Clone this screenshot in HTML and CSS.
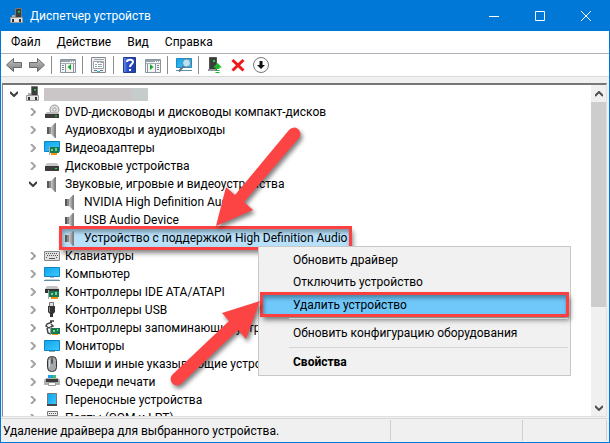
FILE: index.html
```html
<!DOCTYPE html>
<html lang="ru">
<head>
    <meta charset="UTF-8">
    <meta name="viewport" content="width=device-width, initial-scale=1.0">
    <title>Диспетчер устройств</title>
    <link rel="stylesheet" href="styles.css">
</head>
<body>
    <svg class="defs" aria-hidden="true">
        <defs>
            <linearGradient id="metal"><stop offset="0" stop-color="#c8c8c8"/><stop offset=".5" stop-color="#a0a0a0"/><stop offset="1" stop-color="#606060"/></linearGradient>
            <linearGradient id="screen" x2="1" y2="1"><stop offset="0" stop-color="#10a4ee"/><stop offset="1" stop-color="#3cc8fc"/></linearGradient>
            <linearGradient id="grayArrow" x2="0" y2="1"><stop offset="0" stop-color="#c4c4c4"/><stop offset="1" stop-color="#7c7c7c"/></linearGradient>
            <linearGradient id="helpBlue"><stop offset="0" stop-color="#6c9cf0"/><stop offset=".3" stop-color="#2c50c8"/><stop offset="1" stop-color="#203ca8"/></linearGradient>
        </defs>
        <symbol id="i-pc" viewBox="0 0 16 16">
            <path fill="#3c3c3c" stroke="#777" d="M6.500 .5h6v9h-6z"/>
            <path fill="#18d840" d="M9 3h2v1.500H9z"/>
            <path fill="#e4e4e4" stroke="#999" d="M1.500 9.500h12v5h-12z"/>
            <path fill="#333" d="M3 11h2v3H3zM10 11h2v3h-2z"/>
            <path fill="#aaa" d="M3 7h3v2H3z"/>
        </symbol>
        <symbol id="i-speaker" viewBox="0 0 16 16">
            <path fill="#585858" d="M3 5h2v7H3z"/>
            <path fill="#8c8c8c" d="M5 5h2v7H5z"/>
            <path fill="url(#metal)" d="M7 5l4-4h1v15h-1l-4-4z"/>
            <path fill="#808080" d="M11 1h1v15h-1z"/>
        </symbol>
        <symbol id="i-dvd" viewBox="0 0 16 16">
            <circle cx="10.500" cy="5.500" r="4.500" fill="#dcdcdc" stroke="#999"/>
            <circle cx="10.500" cy="5.500" r="1.500" fill="#fff" stroke="#999"/>
            <path fill="#bbb" d="M3 8h11l1 2H1z"/>
            <path fill="#3c3c3c" d="M1 10h14v4H1z"/>
            <path fill="#20e048" d="M11 11.500h2v1h-2z"/>
        </symbol>
        <symbol id="i-video" viewBox="0 0 16 16">
            <path fill="url(#screen)" stroke="#0c84c4" d="M.5 1.500h15v10H.5z"/>
            <path fill="#187850" d="M6 7h9v6H6z"/>
            <path fill="#6ad090" d="M7 9h2v2H7zM11 8h2v3h-2z"/>
            <path fill="#f09018" d="M7 13h6v2H7z"/>
            <path fill="#a8b0b0" d="M5 6h1v9H5z"/>
        </symbol>
        <symbol id="i-disk" viewBox="0 0 16 16">
            <path fill="#c8c8c8" d="M3 5h10l2 3H1z"/>
            <path fill="#3c3c3c" d="M1 8h14v5H1z"/>
            <path fill="#20e048" d="M11 10h2v1h-2z"/>
        </symbol>
        <symbol id="i-keyboard" viewBox="0 0 16 16">
            <path fill="#e0e0e0" stroke="#888" d="M.5 3.500h15v9H.5z"/>
            <path stroke="#555" stroke-dasharray="1 1" d="M2 5.500h12M3 7.500h11M2 9.500h2M12 9.500h2"/>
            <path stroke="#555" d="M5 10.500h6"/>
        </symbol>
        <symbol id="i-computer" viewBox="0 0 16 16">
            <path fill="url(#screen)" stroke="#0c84c4" d="M.5 1.500h15v9H.5z"/>
            <path fill="#a8bcc4" d="M6 11h4v1H6z"/>
            <path stroke="#6090a0" d="M0 14.500h16"/>
            <path stroke="#c4d8e0" d="M1 13.500h14"/>
        </symbol>
        <symbol id="i-ide" viewBox="0 0 16 16">
            <path fill="#c4c4c4" d="M3 2h10l2 3H1z"/>
            <path fill="#333" d="M1 5h14v4H1z"/>
            <path fill="#187850" d="M5 7h10v6H5z"/>
            <path fill="#78d8a0" d="M7 9h2v2H7zM11 8h2v3h-2z"/>
            <path fill="#f09018" d="M7 13h7v2H7z"/>
            <path fill="#aaa" d="M4 6h1v9H4z"/>
        </symbol>
        <symbol id="i-usb" viewBox="0 0 16 16">
            <path fill="#ddd" stroke="#777" d="M5.500 .5h4v4h-4z"/>
            <path fill="#333" d="M4 4h7v6l-2 2v3H6v-3l-2-2z"/>
            <path fill="#888" d="M5 5h1v5H5z"/>
        </symbol>
        <symbol id="i-storage" viewBox="0 0 16 16">
            <path fill="none" stroke="#444" stroke-width="1.500" d="M8 2L3 4l-1 2 3 2 4-2-2-2M6 1h4M3 8l1 5 3 1"/>
            <path fill="#187850" d="M7 8h9v6H7z"/>
            <path fill="#78d8a0" d="M9 10h2v2H9zM13 9h1v2h-1z"/>
            <path fill="#f09018" d="M8 14h6v1H8z"/>
            <path fill="#999" d="M6 7h1v8H6z"/>
        </symbol>
        <symbol id="i-monitor" viewBox="0 0 16 16">
            <path fill="url(#screen)" stroke="#0c84c4" d="M.5 2.500h15v10H.5z"/>
            <path fill="#90a8b0" d="M5 13h6v1H5z"/>
        </symbol>
        <symbol id="i-mouse" viewBox="0 0 16 16">
            <rect x="3.500" y=".5" width="9" height="15" rx="4" fill="#a4a8ac" stroke="#333"/>
            <path stroke="#333" d="M8 1v7"/>
            <path fill="#eee" stroke="#555" d="M7.500 3.500h1v3h-1z"/>
            <path stroke="#ddd" d="M5.500 4v7"/>
        </symbol>
        <symbol id="i-printer" viewBox="0 0 16 16">
            <path fill="#20a0e8" d="M4 1h8v4H4z"/>
            <path fill="#40c060" d="M9 1h3v3H9z"/>
            <path fill="#b0b0b0" d="M2 4h12l2 2v5H0V6z"/>
            <path fill="#3c3c3c" d="M2 5h12v3H2z"/>
            <path fill="#fff" stroke="#999" d="M4.500 8.500h7v3h-7z"/>
        </symbol>
        <symbol id="i-portable" viewBox="0 0 16 16">
            <path fill="url(#screen)" stroke="#777" d="M3.500 1.500h9v12h-9z"/>
            <path fill="#444" d="M3 12h10v2H3z"/>
        </symbol>
        <symbol id="i-port" viewBox="0 0 16 16">
            <path fill="#eee" stroke="#777" d="M3.500 1.500h10v4h-10z"/>
            <path stroke="#555" stroke-dasharray="1 1" d="M5 3.500h7"/>
            <path fill="#555" d="M3 6h11v5l-2 3H5l-2-3z"/>
        </symbol>
        <symbol id="i-down" viewBox="0 0 8 6"><path fill="none" stroke="#3c3c3c" stroke-width="2" d="M0 1l4 4 4-4"/></symbol>
        <symbol id="i-right" viewBox="0 0 6 8"><path fill="none" stroke="#a4a4a4" stroke-width="2" d="M1 0l4 4-4 4"/></symbol>
        <symbol id="i-panel" viewBox="0 0 16 14">
            <path fill="#f4f4f4" stroke="#8c949c" d="M.5 .5h15v13H.5z"/>
            <path fill="#94a0ac" d="M1 1h14v2H1z"/>
            <path stroke="#fff" stroke-dasharray="1 1" d="M10 2.500h5"/>
            <path stroke="#a4acb4" d="M1 4.500h14"/>
        </symbol>
    </svg>

    <div class="window">
        <header class="titlebar">
            <svg class="icon"><use href="#i-pc"/></svg>
            <h1>Диспетчер устройств</h1>
            <div class="window-controls">
                <button aria-label="Свернуть"><svg viewBox="0 0 10 10"><path d="M0 5.500h10"/></svg></button>
                <button aria-label="Развернуть"><svg viewBox="0 0 10 10"><path d="M.5 .5h9v9h-9z"/></svg></button>
                <button aria-label="Закрыть"><svg viewBox="0 0 10 10"><path d="M0 0l10 10M10 0L0 10"/></svg></button>
            </div>
        </header>

        <nav class="menubar">
            <button>Файл</button>
            <button>Действие</button>
            <button>Вид</button>
            <button>Справка</button>
        </nav>

        <div class="toolbar">
            <button aria-label="Назад"><svg class="icon" viewBox="0 0 16 16"><path fill="url(#grayArrow)" stroke="#686868" d="M.5 8l7-6.500v4h8v5h-8v4z"/></svg></button>
            <button aria-label="Вперёд"><svg class="icon" viewBox="0 0 16 16"><path fill="url(#grayArrow)" stroke="#686868" d="M15.500 8l-7-6.500v4h-8v5h8v4z"/></svg></button>
            <span class="separator"></span>
            <button aria-label="Дерево консоли"><svg class="icon" viewBox="0 0 16 16">
                <use href="#i-panel" y="2" width="16" height="14"/>
                <path stroke="#8c949c" d="M5.500 7v8M13.500 7v8"/><path stroke="#7088a0" d="M2 8.500h2M2 10.500h2M2 12.500h2"/>
                <path fill="#10a828" d="M11 7v6L7.500 10z"/></svg></button>
            <span class="separator"></span>
            <button aria-label="Свойства"><svg class="icon" viewBox="0 0 16 16">
                <path fill="#f0f0f0" stroke="#84888c" d="M.5 .5h14v15H.5z"/>
                <path fill="#fff" stroke="#9ca4ac" d="M2.500 4.500h10v7h-10z"/>
                <path stroke="#9ca4ac" d="M3 2.500h10M6 5.500h2M9 5.500h3M4 7.500h2M7 7.500h4M4 9.500h2M7 9.500h4"/>
                <path stroke="#707880" d="M3 13.500h3M9 13.500h3"/><path stroke="#30b8e8" d="M6 14.500h3"/></svg></button>
            <span class="separator"></span>
            <button aria-label="Справка"><svg class="icon" viewBox="0 0 16 16">
                <path fill="url(#helpBlue)" stroke="#203c90" d="M1.500 .5h12v15h-12z"/>
                <path fill="none" stroke="#fff" stroke-width="2" d="M5 5c0-3 6-3 6 0 0 2-3 2-3 5"/><path fill="#fff" d="M7 12h2v2H7z"/></svg></button>
            <button aria-label="Панель действий"><svg class="icon" viewBox="0 0 16 16">
                <use href="#i-panel" y="2" width="16" height="14"/>
                <path stroke="#8c949c" d="M2.500 7v8M10.500 7v8"/><path stroke="#7088a0" d="M12 8.500h2M12 10.500h2M12 12.500h2"/>
                <path fill="#10a828" d="M5 7v6l3.500-3z"/></svg></button>
            <span class="separator"></span>
            <button aria-label="Обновить конфигурацию"><svg class="icon" viewBox="0 0 16 16">
                <path fill="url(#screen)" stroke="#2888b8" d="M.5 1.500h15v9H.5z"/><path stroke="#6090a0" d="M0 13.500h16"/>
                <circle cx="10.500" cy="6" r="4" fill="#b4e4fa" stroke="#70889c"/><path stroke="#607888" stroke-width="2" d="M7.500 9L3 14.500"/></svg></button>
            <span class="separator"></span>
            <button aria-label="Обновить драйвер"><svg class="icon" viewBox="0 0 16 16">
                <path fill="#3c3c3c" stroke="#555" d="M2.500 .5h7v13h-7z"/><path fill="#20d840" d="M6 3h2v2H6z"/><path fill="#999" d="M1 12h8v2H1z"/>
                <path fill="#18b828" d="M10.500 6L15 10.500h-2.500V12h-4v-1.500H6z"/><path stroke="#18b828" d="M8.500 13.500h4M8.500 15.500h4"/></svg></button>
            <button aria-label="Удалить устройство"><svg class="icon" viewBox="0 0 16 16"><path stroke="#f01818" stroke-width="3" d="M2.500 3l11 10.500M13.500 3l-11 10.500"/></svg></button>
            <button aria-label="Отключить устройство"><svg class="icon" viewBox="0 0 16 16">
                <circle cx="8" cy="8" r="7.500" fill="#fff" stroke="#777"/><path fill="#111" d="M6.500 4h3v4H12l-4 4-4-4h2.500z"/></svg></button>
        </div>

        <main class="content">
            <ul class="tree">
                <li class="row root"><button class="toggle" aria-label="Свернуть"><svg class="open"><use href="#i-down"/></svg></button><svg class="icon"><use href="#i-pc"/></svg><span class="computer-name"></span></li>
                <li class="row"><button class="toggle" aria-label="Развернуть"><svg><use href="#i-right"/></svg></button><svg class="icon"><use href="#i-dvd"/></svg><span class="label">DVD-дисководы и дисководы компакт-дисков</span></li>
                <li class="row"><button class="toggle" aria-label="Развернуть"><svg><use href="#i-right"/></svg></button><svg class="icon"><use href="#i-speaker"/></svg><span class="label">Аудиовходы и аудиовыходы</span></li>
                <li class="row"><button class="toggle" aria-label="Развернуть"><svg><use href="#i-right"/></svg></button><svg class="icon"><use href="#i-video"/></svg><span class="label">Видеоадаптеры</span></li>
                <li class="row"><button class="toggle" aria-label="Развернуть"><svg><use href="#i-right"/></svg></button><svg class="icon"><use href="#i-disk"/></svg><span class="label">Дисковые устройства</span></li>
                <li class="row"><button class="toggle" aria-label="Свернуть"><svg class="open"><use href="#i-down"/></svg></button><svg class="icon"><use href="#i-speaker"/></svg><span class="label">Звуковые, игровые и видеоустройства</span></li>
                <li class="row device"><svg class="icon"><use href="#i-speaker"/></svg><span class="label">NVIDIA High Definition Audio</span></li>
                <li class="row device"><svg class="icon"><use href="#i-speaker"/></svg><span class="label">USB Audio Device</span></li>
                <li class="row device"><span class="selected marked"><svg class="icon"><use href="#i-speaker"/></svg><span class="label">Устройство с поддержкой High Definition Audio</span></span></li>
                <li class="row"><button class="toggle" aria-label="Развернуть"><svg><use href="#i-right"/></svg></button><svg class="icon"><use href="#i-keyboard"/></svg><span class="label">Клавиатуры</span></li>
                <li class="row"><button class="toggle" aria-label="Развернуть"><svg><use href="#i-right"/></svg></button><svg class="icon"><use href="#i-computer"/></svg><span class="label">Компьютер</span></li>
                <li class="row"><button class="toggle" aria-label="Развернуть"><svg><use href="#i-right"/></svg></button><svg class="icon"><use href="#i-ide"/></svg><span class="label">Контроллеры IDE ATA/ATAPI</span></li>
                <li class="row"><button class="toggle" aria-label="Развернуть"><svg><use href="#i-right"/></svg></button><svg class="icon"><use href="#i-usb"/></svg><span class="label">Контроллеры USB</span></li>
                <li class="row"><button class="toggle" aria-label="Развернуть"><svg><use href="#i-right"/></svg></button><svg class="icon"><use href="#i-storage"/></svg><span class="label">Контроллеры запоминающих устройств</span></li>
                <li class="row"><button class="toggle" aria-label="Развернуть"><svg><use href="#i-right"/></svg></button><svg class="icon"><use href="#i-monitor"/></svg><span class="label">Мониторы</span></li>
                <li class="row"><button class="toggle" aria-label="Развернуть"><svg><use href="#i-right"/></svg></button><svg class="icon"><use href="#i-mouse"/></svg><span class="label">Мыши и иные указывающие устройства</span></li>
                <li class="row"><button class="toggle" aria-label="Развернуть"><svg><use href="#i-right"/></svg></button><svg class="icon"><use href="#i-printer"/></svg><span class="label">Очереди печати</span></li>
                <li class="row"><button class="toggle" aria-label="Развернуть"><svg><use href="#i-right"/></svg></button><svg class="icon"><use href="#i-portable"/></svg><span class="label">Переносные устройства</span></li>
                <li class="row"><button class="toggle" aria-label="Развернуть"><svg><use href="#i-right"/></svg></button><svg class="icon"><use href="#i-port"/></svg><span class="label">Порты (COM и LPT)</span></li>
            </ul>
            <div class="scrollbar">
                <button aria-label="Вверх"><svg viewBox="0 0 8 6"><path d="M0 5l4-4 4 4"/></svg></button>
                <div class="track"><div class="thumb"></div></div>
                <button aria-label="Вниз"><svg viewBox="0 0 8 6"><path d="M0 1l4 4 4-4"/></svg></button>
            </div>
        </main>

        <footer class="statusbar">
            <span class="status-text">Удаление драйвера для выбранного устройства.</span>
            <span class="status-cell"></span>
            <span class="status-cell"></span>
        </footer>

        <div class="context-menu">
            <button>Обновить драйвер</button>
            <button>Отключить устройство</button>
            <button class="active"><span class="highlight marked">Удалить устройство</span></button>
            <hr>
            <button>Обновить конфигурацию оборудования</button>
            <hr>
            <button class="default">Свойства</button>
        </div>

        <svg class="arrows" viewBox="0 0 610 443" aria-hidden="true">
            <path d="M216 226L226 187L235 195L289 130A6 6 0 0 1 299 138L244 202L253 210Z"/>
            <path d="M260 301L222 313L229 321L173 374A6 6 0 0 0 181 384L238 330L246 339Z"/>
        </svg>
    </div>
</body>
</html>
```
FILE: styles.css
```css
* {
    box-sizing: border-box;
}
body {
    margin: 0;
    font-family: Roboto, "Open Sans", sans-serif;
    font-size: 12px;
    line-height: 18px;
    color: #000;
}
button {
    margin: 0;
    padding: 0;
    border: none;
    background: none;
    font: inherit;
    color: inherit;
}
svg {
    display: block;
}
.defs {
    position: absolute;
    width: 0;
    height: 0;
}
.icon {
    flex: none;
    width: 16px;
    height: 16px;
}
.window {
    position: relative;
    display: flex;
    flex-direction: column;
    height: 100vh;
    border: 1px solid #0078d7;
    border-top: none;
    background: #f0f0f0;
    overflow: hidden;
}

/* title and menu */
.titlebar {
    display: flex;
    align-items: center;
    flex: none;
    height: 31px;
    padding-left: 8px;
    background: #0078d7;
    color: #fff;
}
.titlebar h1 {
    margin: 0 auto 0 5px;
    font-size: 12px;
    font-weight: normal;
}
.window-controls {
    display: flex;
}
.window-controls button {
    display: flex;
    align-items: center;
    justify-content: center;
    width: 46px;
    height: 31px;
}
.window-controls svg {
    width: 10px;
    height: 10px;
    fill: none;
    stroke: #fff;
}
.menubar {
    display: flex;
    flex: none;
    gap: 16px;
    height: 23px;
    padding: 0 10px;
    background: #fff;
    border-bottom: 1px solid #b0b0b8;
}
.toolbar {
    display: flex;
    align-items: center;
    flex: none;
    gap: 1px;
    height: 23px;
    padding: 0 2px;
    background: #fff;
    border-bottom: 1px solid #d8d8d8;
}
.toolbar button {
    display: flex;
    justify-content: center;
    width: 22px;
}
.separator {
    width: 1px;
    height: 18px;
    margin: 0 4px 0 2px;
    background: #8c8c8c;
}

/* device tree */
.content {
    display: flex;
    flex: 1;
    min-height: 0;
    margin: 6px 2px 0 1px;
    border: 1px solid #828790;
    border-top: 2px solid #777;
    border-right-color: #e0e0e0;
    border-bottom-color: #e0e0e0;
    background: #fff;
}
.tree {
    flex: 1;
    margin: 0;
    padding: 0;
    list-style: none;
    overflow: hidden;
}
.row {
    display: flex;
    align-items: center;
    height: 18px;
    padding-left: 23px;
    white-space: nowrap;
}
.root {
    padding-left: 4px;
}
.device {
    padding-left: 59px;
}
.toggle {
    display: flex;
    align-items: center;
    justify-content: center;
    width: 14px;
    height: 18px;
    margin-right: 4px;
}
.toggle svg {
    width: 6px;
    height: 8px;
}
.toggle .open {
    width: 8px;
    height: 6px;
}
.label {
    margin-left: 5px;
}
.device .label {
    margin-left: 6px;
}
.computer-name {
    width: 104px;
    height: 13px;
    margin-left: 3px;
    background: linear-gradient(90deg, #cac6c8 85%, #c6cccc 85%);
}
.selected {
    display: flex;
    align-items: center;
    height: 18px;
    padding-right: 2px;
    background: #b8e0fa;
}
.marked {
    outline: 3px solid #fc4040;
    box-shadow: 2px 4px 5px 2px rgba(0, 0, 0, 0.5), inset 1px 3px 4px rgba(0, 0, 0, 0.35);
}
.scrollbar {
    display: flex;
    flex-direction: column;
    width: 15px;
    background: #f0f0f0;
}
.scrollbar button {
    display: flex;
    align-items: center;
    justify-content: center;
    height: 17px;
}
.scrollbar svg {
    width: 8px;
    height: 6px;
    fill: none;
    stroke: #505050;
    stroke-width: 2;
}
.track {
    flex: 1;
}
.thumb {
    height: 69%;
    background: #cdcdcd;
}

.statusbar {
    display: flex;
    flex: none;
    height: 24px;
    margin-top: 1px;
    padding: 1px 2px;
    border-top: 1px solid #d8d8d8;
}
.status-text {
    flex: 1;
    line-height: 22px;
}
.status-cell {
    width: 22%;
    border-left: 1px solid #d0d0d0;
}
.status-cell:last-child {
    width: 14%;
    border-right: 1px solid #d0d0d0;
}

/* context menu over the tree */
.context-menu {
    position: absolute;
    top: 246px;
    left: 257px;
    width: 313px;
    padding: 2px;
    border: 1px solid #c8c8c8;
    background: #f1f1f1;
}
.context-menu button {
    display: block;
    width: 100%;
    height: 22px;
    padding-left: 32px;
    line-height: 22px;
    text-align: left;
}
.context-menu .active {
    padding: 1px 2px;
}
.highlight {
    display: block;
    height: 19px;
    padding-left: 30px;
    line-height: 20px;
    background: #70c8fa;
}
.context-menu hr {
    height: 1px;
    margin: 3px 0 3px 28px;
    border: none;
    background: #d4d4d4;
}
.context-menu .default {
    font-weight: bold;
}
.arrows {
    position: absolute;
    top: 0;
    left: -1px;
    width: 610px;
    height: 443px;
    fill: #fc4444;
    filter: drop-shadow(2px 3px 2px rgba(0, 0, 0, 0.5));
    pointer-events: none;
}
```
